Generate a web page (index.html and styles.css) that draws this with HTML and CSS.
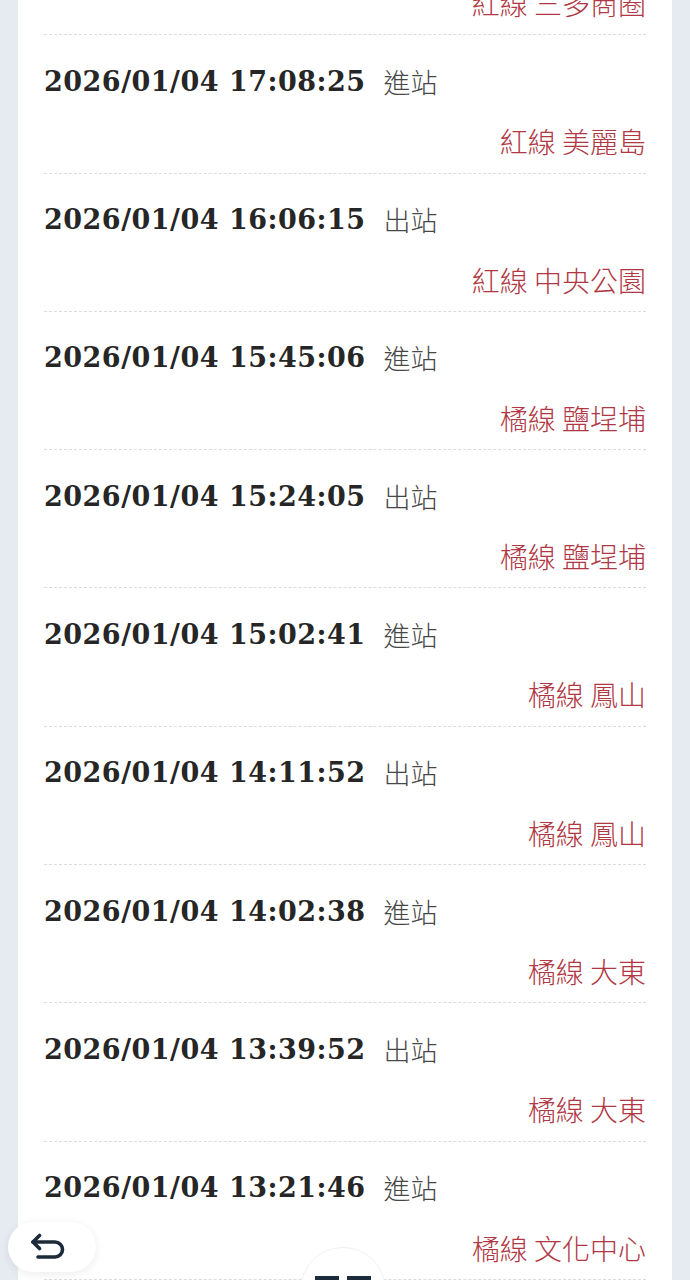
FILE: index.html
```html
<!DOCTYPE html>
<html lang="zh-Hant">
<head>
  <meta charset="UTF-8" />
  <meta name="viewport" content="width=device-width, initial-scale=1.0"/>
  <title>進出站紀錄</title>
  <link rel="stylesheet" href="styles.css">
</head>
<body>
<div class="card">
  <ul class="records">
    <li class="record">
      <div class="when"><span class="time">2026/01/04 17:30:11</span><span class="kind">出站</span></div>
      <div class="station">紅線 三多商圈</div>
    </li>
    <li class="record">
      <div class="when"><span class="time">2026/01/04 17:08:25</span><span class="kind">進站</span></div>
      <div class="station">紅線 美麗島</div>
    </li>
    <li class="record">
      <div class="when"><span class="time">2026/01/04 16:06:15</span><span class="kind">出站</span></div>
      <div class="station">紅線 中央公園</div>
    </li>
    <li class="record">
      <div class="when"><span class="time">2026/01/04 15:45:06</span><span class="kind">進站</span></div>
      <div class="station">橘線 鹽埕埔</div>
    </li>
    <li class="record">
      <div class="when"><span class="time">2026/01/04 15:24:05</span><span class="kind">出站</span></div>
      <div class="station">橘線 鹽埕埔</div>
    </li>
    <li class="record">
      <div class="when"><span class="time">2026/01/04 15:02:41</span><span class="kind">進站</span></div>
      <div class="station">橘線 鳳山</div>
    </li>
    <li class="record">
      <div class="when"><span class="time">2026/01/04 14:11:52</span><span class="kind">出站</span></div>
      <div class="station">橘線 鳳山</div>
    </li>
    <li class="record">
      <div class="when"><span class="time">2026/01/04 14:02:38</span><span class="kind">進站</span></div>
      <div class="station">橘線 大東</div>
    </li>
    <li class="record">
      <div class="when"><span class="time">2026/01/04 13:39:52</span><span class="kind">出站</span></div>
      <div class="station">橘線 大東</div>
    </li>
    <li class="record">
      <div class="when"><span class="time">2026/01/04 13:21:46</span><span class="kind">進站</span></div>
      <div class="station">橘線 文化中心</div>
    </li>
  </ul>
</div>

<!-- floating controls -->
<button class="back-btn" aria-label="返回">
  <svg width="38" height="28" viewBox="0 0 38 28" fill="none" stroke="#1c2b3a" stroke-width="3.6" stroke-linecap="round" stroke-linejoin="round">
    <path d="M4 9 H26 a7.5 7.5 0 0 1 0 15 H9"/>
    <path d="M10.5 2.5 L4 9 L10.5 15.5"/>
  </svg>
</button>
<div class="menu-btn">
  <span class="menu-bar"></span><span class="menu-bar"></span>
</div>
</body>
</html>
```

FILE: styles.css
```css
* { box-sizing: border-box; }
html, body { height: 100%; }
body {
  margin: 0;
  background: #e6eaf1;
  overflow: hidden;
  font-family: "Noto Sans CJK TC", "Noto Sans", sans-serif;
}
.card {
  margin: 0 18px;
  min-height: 100%;
  background: #fff;
  padding: 0 26px;
}
.records {
  list-style: none;
  margin: -103px 0 0;
  padding: 0;
}
.record {
  height: 138.3px;
  padding-top: 28px;
  border-bottom: 1px dashed #dcdcdc;
}
.when {
  display: flex;
  align-items: center;
  height: 36px;
  gap: 18px;
}
.time {
  font-family: "DejaVu Serif", "Liberation Serif", serif;
  font-weight: bold;
  font-size: 27px;
  letter-spacing: 0.5px;
  color: #262626;
}
.kind {
  font-size: 27px;
  font-weight: 300;
  color: #474747;
}
.station {
  margin-top: 23px;
  height: 38px;
  line-height: 38px;
  text-align: right;
  font-size: 28px;
  font-weight: 300;
  color: #b03844;
}

.back-btn {
  position: fixed;
  left: 8px;
  top: 1222px;
  width: 88px;
  height: 50px;
  border: none;
  border-radius: 25px;
  background: #fff;
  box-shadow: 0 2px 10px rgba(0,0,0,0.08);
  display: flex;
  align-items: center;
  justify-content: center;
  padding: 0 8px 0 0;
}
.menu-btn {
  position: fixed;
  left: 300px;
  top: 1247px;
  width: 86px;
  height: 86px;
  border-radius: 50%;
  background: #fff;
  border: 1px solid #f0f0f0;
  display: flex;
  justify-content: center;
  gap: 8px;
  padding-top: 28px;
}
.menu-bar {
  width: 24px;
  height: 10px;
  background: #1c2b3a;
}
```
